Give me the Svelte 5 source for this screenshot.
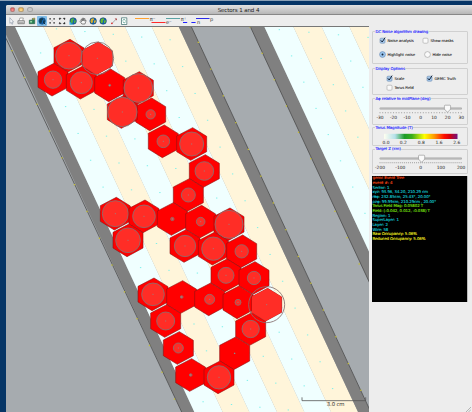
<script>
  // Canvas units are thirds of a pixel.
  const K = 0.4655;
  const TOP = 78;
  const BOTTOM = 1236;
  const shift = (BOTTOM - TOP) * K;
  const band = (a, b) => `${a},${TOP} ${b},${TOP} ${b + shift},${BOTTOM} ${a + shift},${BOTTOM}`;

  const stripes = [
    [6, 44, '#808080'], [44, 129, '#f0ffff'], [129, 209, '#fff5da'], [209, 292, '#f0ffff'],
    [292, 374, '#fff5da'], [374, 454, '#f0ffff'], [454, 535, '#fff5da'], [535, 573, '#808080'],
    [750, 792, '#808080'], [792, 879, '#f0ffff'], [879, 964, '#fff5da'], [964, 1047, '#f0ffff'],
    [1047, 1140, '#fff5da']
  ];

  const wires = [];
  for (let j = -7; j <= 14; j++) {
    for (let i = -1; i <= 4; i++) {
      wires.push([207 + i * 85.2 + j * 37.5, 167 + i * 8.2 + j * 80.5]);
    }
  }
  for (let j = 0; j < 9; j++) {
    for (let i = 0; i < 4; i++) {
      wires.push([838 + i * 88.7 + j * 36.7, 89 + i * 7.7 + j * 78.7]);
    }
  }

  const pins = [];
  for (let j = 0; j < 15; j++) {
    pins.push([36 + j * 37.5, 152 + j * 80.4]);
    pins.push([595 + j * 37.5, 127 + j * 80.3]);
    pins.push([750 + j * 36.4, 81 + j * 79]);
  }

  const cells = [
    [207, 167, 40], [159, 239, 26], [244, 248, 33], [329, 256, 3],
    [415, 264, 43], [452, 343, 14], [490, 424, 19], [575, 432, 36],
    [613, 513, 28], [565, 585, 21], [346, 641, 39], [432, 649, 34], [517, 657, 5],
    [602, 665, 13], [687, 673, 42], [384, 721, 37], [555, 738, 32], [640, 746, 35],
    [725, 754, 20], [678, 826, 24], [762, 834, 20], [459, 883, 34], [545, 891, 4],
    [629, 898, 15], [714, 907, 9], [497, 963, 27], [535, 1044, 15],
    [572, 1125, 4], [752, 987, 26], [704, 1060, 1], [657, 1132, 35],
    [292, 175, 49], [367, 336, 44], [800, 914, 54]
  ];
  const hex = '3,-49 45,-23 45,23 -3,49 -45,23 -45,-24';

  const log = [
    ['gemc Event Tree', 'o'], ['event #: 4', 'o'], ['Sector: 1', 'c'],
    ['xyz: 93.96, 34.20, 210.29 cm', 'c'], ['rθφ: 232.85cm, 25.43°, 20.00°', 'c'],
    ['ρzφ: 99.99cm, 210.29cm , 20.00°', 'c'], ['Torus Field Mag: 0.05802 T', 'g'],
    ['Field: (-0.042, 0.012, -0.038) T', 'g'], ['Region: 1', 'c'], ['SuperLayer: 1', 'c'],
    ['Layer: 2', 'c'], ['Wire: 58', 'c'], ['Raw Occupancy: 5.06%', 'y'], ['Reduced Occupancy: 5.06%', 'y']
  ];

  const phi = ['-30', '-20', '-10', '0', '10', '20', '30'];
  const target = ['-200', '-100', '0', '100', '200'];
  const field = [['0.0', 386], ['0.2', 403.3], ['0.8', 421.3], ['1.6', 439], ['2.6', 456.7]];
</script>

{#snippet box(on)}
  <svg class="ctl" width="7" height="7" viewBox="0 0 7 7">
    <rect x="1" y="1.2" width="5" height="5" rx="1" fill={on ? '#a5c8ea' : '#fafafa'} stroke={on ? '#7390b4' : '#a5a5a5'} stroke-width=".6" />
    {#if on}<path d="M1.8 3.3 3.2 5 6.1.6" fill="none" stroke="#17263d" stroke-width="1" />{/if}
  </svg>
{/snippet}

{#snippet radio(on)}
  <svg class="ctl" width="7" height="7" viewBox="0 0 7 7">
    <circle cx="3.5" cy="3.5" r="2.9" fill={on ? '#9cc8f2' : '#fafafa'} stroke={on ? '#6685ad' : '#999'} stroke-width=".6" />
    {#if on}<circle cx="3.5" cy="3.5" r="1" fill="#152338" />{/if}
  </svg>
{/snippet}

{#snippet slider(labels, pos, ticks)}
  <svg class="slider" width="96" height="20" viewBox="372 0 96 20">
    <rect x="379.5" y="3.6" width="82.5" height="1.8" rx=".9" fill="#a5a5a5" />
    <rect x="380" y="4.5" width="81.5" height=".7" fill="#c9c9c9" />
    {#each Array(ticks + 1) as _, i}
      <path d="M{380 + (i * 81.2) / ticks} 8v1.3" stroke="#888" stroke-width=".6" />
    {/each}
    <path d="M{pos - 3.1} 2q0-.8.8-.8h4.6q.8 0 .8.8v3.1l-3.1 3.2-3.1-3.2z" fill="#fafafa" stroke="#8d8d8d" stroke-width=".6" />
    {#each labels as l, i}
      <text x={380 + (i * 81.2) / (labels.length - 1)} y="15.4" text-anchor="middle">{l}</text>
    {/each}
  </svg>
{/snippet}

{#snippet globe(c)}
  <circle cx="5" cy="5" r="3.3" fill="#1264b0" />
  <path d="M3 2.7 5.3 2l.8 1.5-1.5 1.2.3 1.4-1.3 1.4-1.5-2zM6.4 4.3l1.6.1-.5 2.1-1.3.8-.4-1.6z" fill={c} />
  <circle cx="5" cy="5" r="3.3" fill="none" stroke="#12385d" stroke-width=".5" />
{/snippet}

<div class="desktop">
  <div class="window">
    <header>
      <span class="lights"><i class="r"></i><i class="a"></i><i class="n"></i></span>
      <span class="title">Sectors 1 and 4</span>
    </header>

    <div class="toolbar">
      <svg viewBox="0 0 10 10"><path d="M3.7 1.7v5.7l1.3-1.1.8 2 .9-.4-.8-1.9h1.6z" fill="#f6f7fa" stroke="#8a95a5" stroke-width=".6" /></svg>
      <svg viewBox="0 0 10 10"><path d="M3 4.5 3.8 2h3.4l-.6 2.5" fill="#fff" stroke="#777" stroke-width=".6" /><path d="M1.8 4.7h6.4v3H1.8z" fill="#ddd" stroke="#666" stroke-width=".7" /><path d="M2.6 6.4h4.8" stroke="#777" stroke-width=".5" /></svg>
      <svg viewBox="0 0 10 10"><path d="M2.2 4.2h3V2.6l2.4-.5v5.6H2.2z" fill="#278052" stroke="#275a46" stroke-width=".6" /><path d="M3 4.9h2v1.5H3z" fill="#9bd8aa" /><path d="M5.4 2.4 7.5 2v1.5H5.4z" fill="#d7a352" /></svg>
      <svg class="on" viewBox="0 0 10 10">{@render globe('#123c50')}<path d="M6.5 6.5 8.3 8.3" stroke="#123" stroke-width="1" /></svg>
      <svg viewBox="0 0 10 10"><path d="M2.2 2.2h1.6v1.4H2.2zM6.2 2.2h1.6v1.4H6.2zM2.2 6.2h1.6v1.4H2.2zM6.2 6.2h1.6v1.4H6.2z" fill="#333" /><path d="M4.5 4.8h1" stroke="#777" stroke-width=".6" /></svg>
      <svg viewBox="0 0 10 10"><path d="m2 2 2 .3-1.5 1.5zM8 2l-2 .3 1.5 1.5zM2 8l2-.3-1.5-1.5zM8 8l-2-.3 1.5-1.5z" fill="#222" stroke="#222" stroke-width=".4" /></svg>
      <svg viewBox="0 0 10 10">{@render globe('#4fae45')}<path d="M2 6v2.2h2.4" fill="none" stroke="#38b7e8" stroke-width="1.2" /></svg>
      <svg viewBox="0 0 10 10"><path d="M3.8 8 1.8 5.4l.7-.5 1 .8-.5-2.5.8-.2.7 1.8V2h.8l.2 2.7L6.2 2.5l.7.2-.3 2.5.8-1 .6.3L6.8 8z" fill="#f6f6f6" stroke="#444" stroke-width=".6" /></svg>
      <svg viewBox="0 0 10 10">{@render globe('#d4b034')}</svg>
      <svg viewBox="0 0 10 10">{@render globe('#67b832')}</svg>
      <svg viewBox="0 0 10 10"><path d="M3 7.3 7 3.2" stroke="#555" stroke-width=".7" stroke-dasharray="1 .5" /><circle cx="2.8" cy="7.3" r=".9" fill="#d33" /><path d="M5.5 2.4h2.2v2.2z" fill="#a33" /></svg>
      <svg viewBox="0 0 10 10"><path d="M2.4 1.8h5.3v6.7H2.4z" fill="#fff" stroke="#376b68" stroke-width=".7" /><path d="M3.5 4.4q1.4-2 2.9 0M6.6 5.8q-1.4 2-2.9 0" fill="none" stroke="#25866f" stroke-width=".7" /></svg>
      <svg class="legend" width="82" height="11" viewBox="134 15 82 11">
        <g stroke-width="1" fill="none">
          <path d="M135 18.5h14" stroke="#ffa12e" /><path d="M151.5 22.5h14" stroke="#ff2a2a" />
          <path d="M166 18.5h14" stroke="#5ba3a5" /><path d="M183 22.5h14.5" stroke="#2222ff" stroke-dasharray="4.2 4.2" />
          <path d="M196 18.5h13.5" stroke="#2b2be8" />
        </g>
        <text x="149.8" y="20.5">π⁻</text><text x="166" y="24">e⁻</text><text x="180.8" y="20.5">π⁺</text><text x="197" y="24">n</text><text x="210" y="20.5">p</text>
      </svg>
    </div>

    <main>
      <svg class="canvas" width="363" height="386" viewBox="18 78 1089 1158">
        <rect x="18" y="78" width="1089" height="1158" fill="#a6abaf" />
        {#each stripes as [a, b, c]}
          <polygon points={band(a, b)} fill={c} />
        {/each}
        <g stroke="#4d4d4d" stroke-width="2.4">
          <path d="M18 115 545 1236M573 78 1110 1231M750 78 1110 851" />
        </g>
        {#each wires as [x, y]}
          <rect x={x - 2} y={y - 1.5} width="4" height="3" fill="#7df0ea" />
        {/each}
        {#each pins as [x, y]}
          <rect x={x - 2} y={y - 2} width="4" height="4" fill="#c5bd35" />
        {/each}
        <clipPath id="cell"><polygon points={hex} /></clipPath>
        {#each cells as [x, y, r]}
          <g transform="translate({x} {y})">
            <polygon points={hex} fill="#f00" stroke="#8c1010" stroke-width="1.8" />
            <circle {r} fill="#ff2d26" clip-path="url(#cell)" />
            <circle {r} fill="none" stroke="#887070" stroke-width="2.6" />
            <rect x="-1.5" y="-1.5" width="3" height="3" fill={r < 6 ? '#65b6b6' : '#9a8080'} />
          </g>
        {/each}
        <path d="M18 79.5H1107" stroke="#777" stroke-width="3" />
        <path d="M906 1192v10h191v-10" fill="none" stroke="#555" stroke-width="2.4" />
        <text x="1007" y="1217" text-anchor="middle" textLength="53">3.0 cm</text>
      </svg>

      <aside>
        <section class="noise">
          <h2>DC Noise algorithm drawing</h2>
          <div class="row"><label class="w1">{@render box(true)}Noise analysis</label><label>{@render box(false)}Show masks</label></div>
          <div class="row second"><label class="w2">{@render radio(true)}Highlight noise</label><label>{@render radio(false)}Hide noise</label></div>
        </section>
        <section class="display">
          <h2>Display Options</h2>
          <div class="row"><label class="w3">{@render box(true)}Scale</label><label>{@render box(true)}GEMC Truth</label></div>
          <div class="row"><label>{@render box(false)}Torus Field</label></div>
        </section>
        <section class="phi">
          <h2>Δφ relative to midPlane (deg)</h2>
          {@render slider(phi, 447.5, 30)}
        </section>
        <section class="torus">
          <h2>Torus Magnitude (T)</h2>
          <svg width="96" height="15" viewBox="372 0 96 15">
            <defs>
              <linearGradient id="mag">
                <stop offset="0" stop-color="#fffff0" /><stop offset=".15" stop-color="#b5e0ea" />
                <stop offset=".28" stop-color="#1c9c28" /><stop offset=".38" stop-color="#39ad1b" />
                <stop offset=".55" stop-color="#ffff00" /><stop offset=".68" stop-color="#ff9b00" />
                <stop offset=".82" stop-color="#ff0d00" /><stop offset=".9" stop-color="#d00010" /><stop offset="1" stop-color="#70127e" />
              </linearGradient>
            </defs>
            <rect x="384" y="3.8" width="73.5" height="5.2" fill="url(#mag)" />
            {#each field as [l, x]}<text {x} y="13.6" text-anchor="middle">{l}</text>{/each}
          </svg>
        </section>
        <section class="target">
          <h2>Target Z (cm)</h2>
          {@render slider(target, 421.6, 40)}
        </section>
        <div class="log">
          {#each log as [text, c]}<p class={c}>{text}</p>{/each}
        </div>
        <svg class="grip" width="5" height="5" viewBox="0 0 5 5"><path d="M0 5 5 0M2.5 5 5 2.5" stroke="#999" stroke-width=".7" /></svg>
      </aside>
    </main>
  </div>
</div>

<style>
  :global(body) { overflow: hidden; }
  .desktop {
    box-sizing: border-box; width: 472px; height: 412px; padding: 4px 0 0 6px;
    background: #063566; border-top: 1px solid #8ba1b7; overflow: hidden;
    font-family: "DejaVu Sans", sans-serif; color: #222;
  }
  .window { width: 465.5px; height: 407px; background: #ededed; border-radius: 2px 0 0 0; overflow: hidden; display: flex; flex-direction: column; }
  header {
    box-sizing: border-box; height: 10px; flex: none; display: flex; align-items: center;
    background: linear-gradient(#e2e2e2, #b7b7b7); border-bottom: .6px solid #888;
  }
  .lights { display: flex; gap: 3.4px; padding-left: 3.6px; width: 208.5px; box-sizing: border-box; }
  .lights i { width: 5.4px; height: 5.4px; border-radius: 50%; box-sizing: border-box; border: .5px solid #8888; }
  .lights .r { background: radial-gradient(circle at 50% 70%, #f99, #d9443f); }
  .lights .a { background: radial-gradient(circle at 50% 70%, #ffe29a, #e19b35); }
  .lights .n { background: #c8c8c8; }
  .title { width: 46px; text-align: center; font-size: 5.5px; letter-spacing: -.1px; white-space: nowrap; line-height: 9px; padding: 1px 0 0 1px; }
  .toolbar { height: 11px; flex: none; display: flex; align-items: center; background: #ededed; }
  .toolbar svg { width: 10.25px; height: 10px; flex: none; }
  .toolbar .on { background: #80bde8; border-radius: 1px; }
  .toolbar .legend { width: 82px; height: 11px; margin-left: 5px; }
  .legend text { font-size: 5px; fill: #333; }
  main { display: flex; height: 386px; }
  .canvas { flex: none; display: block; }
  .canvas text { font-size: 16px; fill: #333; }
  aside { width: 102px; box-sizing: border-box; padding: 5px 3px 0; display: flex; flex-direction: column; position: relative; }
  section { box-sizing: border-box; width: 96px; flex: none; border: 1px solid #d0d0d0; border-radius: 1px; }
  h2 {
    margin: -3.3px 0 0 2px; padding: 0 .5px; width: max-content; background: #ededed;
    font-size: 3.9px; line-height: 5px; font-weight: 400; letter-spacing: -.08px; color: #2020ff;
    -webkit-text-stroke: .12px #2020ff; white-space: nowrap;
  }
  .noise { height: 33px; margin-bottom: 4px; }
  .display { height: 27px; margin-bottom: 3.4px; }
  .phi { height: 26.2px; margin-bottom: 2.7px; }
  .torus { height: 18.8px; margin-bottom: 2.6px; }
  .target { height: 25.2px; margin-bottom: 2.1px; }
  section svg { display: block; margin-left: -1px; }
  .phi .slider { margin-top: 2.7px; }
  .target .slider { margin-top: 2.2px; }
  .row { display: flex; height: 9px; align-items: center; }
  .noise .row { padding: 2.5px 0 0 6px; }
  .noise .second { padding-top: 4.8px; }
  .display .row { padding-left: 13px; }
  .display h2 + .row { padding-top: 3px; }
  label { display: flex; align-items: center; gap: 1.5px; font-size: 3.8px; letter-spacing: -.07px; white-space: nowrap; -webkit-text-stroke: .08px #222; }
  .w1 { width: 43px; }
  .w2 { width: 45px; }
  .w3 { width: 40px; }
  section .ctl { margin: 0; flex: none; }
  section text { font-size: 4.4px; fill: #222; }
  .log { height: 126px; flex: none; background: #000; border-right: .5px solid #bbb; box-sizing: border-box; padding-top: .5px; }
  .log p { margin: 0; height: 4.67px; line-height: 4.67px; font-size: 3.9px; letter-spacing: -.06px; white-space: pre; padding-left: .5px; }
  .o { color: #ff4a16; -webkit-text-stroke: .12px #ff4a16; }
  .c { color: #12c8d4; -webkit-text-stroke: .12px #12c8d4; }
  .g { color: #7ee010; -webkit-text-stroke: .12px #7ee010; }
  .y { color: #f2ee20; -webkit-text-stroke: .12px #f2ee20; }
  .grip { position: absolute; right: 0; bottom: 0; }
</style>
